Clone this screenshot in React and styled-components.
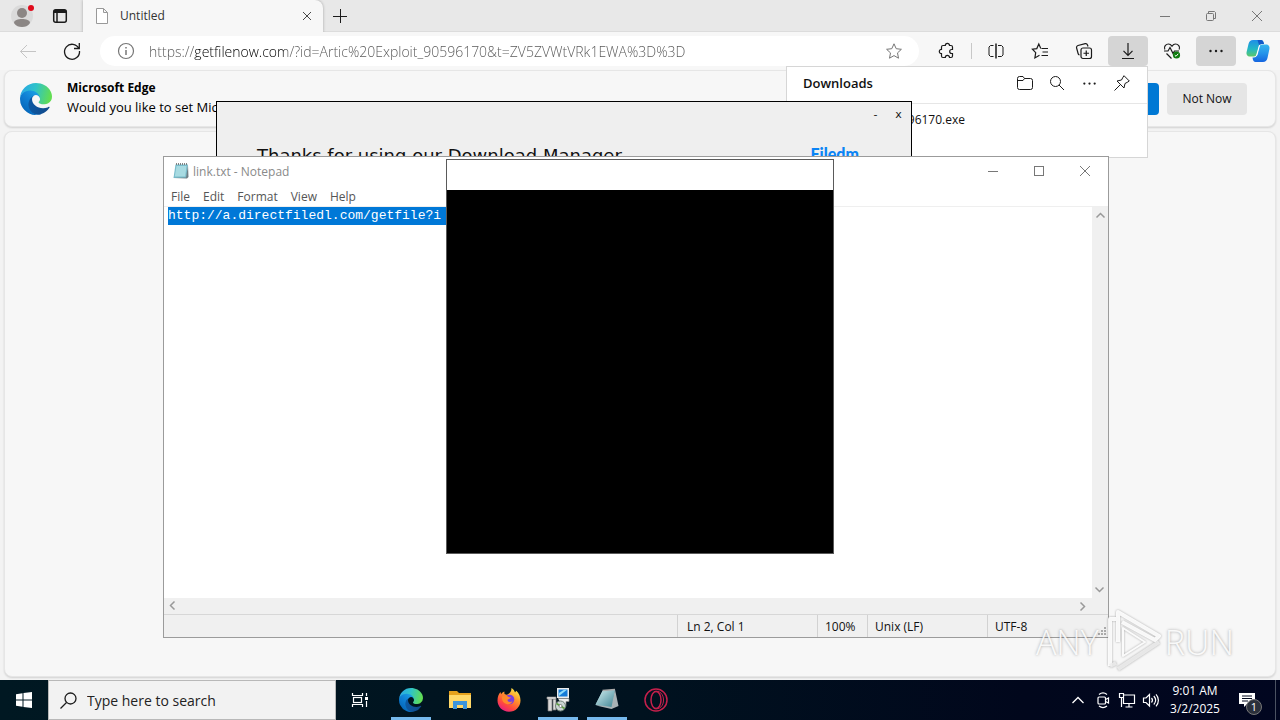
import React, { useId } from "react"
import styled, { createGlobalStyle, css } from "styled-components"

const GlobalStyle = createGlobalStyle`
    * { box-sizing: border-box; }
    body {
        margin: 0;
        overflow: hidden;
        font-family: "Open Sans", "Noto Sans", sans-serif;
        font-size: 12px;
        color: #111;
    }
    button, input, textarea {
        font: inherit;
        color: inherit;
        border: 0;
        padding: 0;
        margin: 0;
        background: none;
        outline: 0;
    }
    svg { display: block; flex: none; }
`

/* ---------- desktop ---------- */

const Desktop = styled.main`
    position: relative;
    display: flex;
    flex-direction: column;
    height: 100vh;
    overflow: hidden;
    background: #f3f3f3;
`
const IconButton = styled.button`
    display: flex;
    align-items: center;
    justify-content: center;
    flex: none;
    width: ${props => props.$width || 40}px;
    height: ${props => props.$height || 30}px;
    border-radius: ${props => props.$radius || 0}px;
    background: ${props => (props.$active ? "#d5d5d5" : "transparent")};
    color: ${props => props.$color || "#1b1b1b"};
`
const Icon = styled.svg.attrs({ fill: "none", stroke: "currentColor", "aria-hidden": true })`
    width: ${props => props.$size || 16}px;
    height: ${props => props.$size || 16}px;
    stroke-width: ${props => props.$stroke || 1};
    overflow: visible;
`

/* ---------- browser ---------- */

const Browser = styled.section`
    display: flex;
    flex-direction: column;
    flex: 1;
    min-height: 0;
    background: #f3f3f3;
`
const TabStrip = styled.div`
    display: flex;
    align-items: center;
    height: 32px;
    background: #e8e8e8;
    border-bottom: 1px solid #dcdcdc;
`
const StripButtons = styled.div`
    display: flex;
    align-items: center;
    gap: 6px;
    width: 83px;
    padding-left: 6px;
`
const Tab = styled.div`
    display: flex;
    align-items: center;
    align-self: stretch;
    width: 240px;
    margin-bottom: -1px;
    padding-left: 11px;
    background: #f7f7f7;
    border-radius: 0 8px 0 0;
    box-shadow: 0 0 3px rgba(0, 0, 0, .3);
    clip-path: inset(0 -4px 0 -4px);
    line-height: 30px;
    color: #333;
`
const TabTitle = styled.span`
    flex: 1;
    padding-left: 10px;
`
const WindowButtons = styled.div`
    display: flex;
    margin-left: auto;
`
const Toolbar = styled.div`
    display: flex;
    align-items: flex-start;
    gap: 4px;
    height: 38px;
    padding: 4px 4px 4px 8px;
    background: #f7f7f7;
`
const AddressBar = styled.label`
    display: flex;
    align-items: center;
    flex: 1;
    height: 30px;
    margin: 0 4px;
    padding: 0 17px;
    border-radius: 15px;
    background: #fff;
    color: #767676;
`
const AddressInput = styled.input`
    flex: 1;
    min-width: 0;
    height: 30px;
    padding-left: 14px;
    font-size: 14px;
    font-weight: 300;
    background: linear-gradient(90deg, #555 59px, #000 59px, #000 150px, #555 150px);
    background-clip: text;
    -webkit-text-fill-color: transparent;
`
const Divider = styled.span`
    align-self: center;
    width: 1px;
    height: 16px;
    background: #c8c8c8;
`
const Card = styled.div`
    margin: 0 4px;
    border: 1px solid #e6e6e6;
    border-radius: 8px;
    background: #f7f7f7;
    box-shadow: 0 1px 2px rgba(0, 0, 0, .14);
`
const InfoBar = styled(Card)`
    display: flex;
    align-items: center;
    gap: 8px;
    height: 57px;
    padding: 0 28px 0 15px;
`
const InfoText = styled.div`
    flex: 1;
    padding: 0 0 2px 7px;
    color: #000;
    line-height: 20px;
    font-size: 13px;
`
const InfoTitle = styled.strong`
    display: block;
    font-size: 12px;
    line-height: 18px;
`
const InfoButton = styled.button`
    width: ${props => props.$width}px;
    height: 32px;
    border-radius: 4px;
    background: ${props => (props.$primary ? "#0078d4" : "#e5e5e5")};
    color: ${props => (props.$primary ? "#fff" : "#111")};
`
const PageArea = styled(Card)`
    flex: 1;
    margin-top: 4px;
    margin-bottom: 3px;
`

/* ---------- floating windows ---------- */

const Floating = styled.section`
    position: absolute;
    display: flex;
    flex-direction: column;
`
const DownloadsPopup = styled(Floating)`
    top: 66px;
    right: 132px;
    width: 362px;
    height: 92px;
    background: #fff;
    border: 1px solid #d6d6d6;
`
const DownloadsHeader = styled.header`
    display: flex;
    align-items: center;
    height: 37px;
    padding: 0 8px 4px 16px;
    border-bottom: 1px solid #e6e6e6;
`
const DownloadsTitle = styled.h2`
    flex: 1;
    margin: 0;
    font-size: 13px;
    font-weight: 600;
`
const DownloadsItem = styled.div`
    padding: 7px 182px 0 0;
    line-height: 18px;
    text-align: right;
`
const Manager = styled(Floating)`
    top: 101px;
    left: 216px;
    width: 696px;
    height: 240px;
    background: #efefef;
    border: 1px solid #000;
`
const ManagerBar = styled.div`
    display: flex;
    justify-content: flex-end;
    height: 26px;
    padding-right: 1px;
    font-family: "DejaVu Sans", sans-serif;
    font-size: 11px;
`
const ManagerBody = styled.div`
    display: flex;
    justify-content: space-between;
    align-items: center;
    height: 50px;
    padding: 6px 52px 0 40px;
`
const ManagerHeading = styled.h1`
    margin: 0;
    font-family: "DejaVu Sans", sans-serif;
    font-size: 18px;
    font-weight: 400;
    line-height: 24px;
`
const ManagerLogo = styled.strong`
    font-family: Lato, sans-serif;
    font-size: 16px;
    font-weight: 900;
    line-height: 24px;
    padding-bottom: 4px;
    color: #0a84f5;
`
const Notepad = styled(Floating)`
    top: 156px;
    left: 163px;
    width: 946px;
    height: 482px;
    background: #fff;
    border: 1px solid #9b9b9b;
`
const NotepadTitle = styled.header`
    display: flex;
    align-items: center;
    gap: 4px;
    height: 30px;
    padding: 0 0 2px 9px;
    color: #8a8a8a;
`
const MenuBar = styled.nav`
    display: flex;
    gap: 13px;
    height: 20px;
    padding-left: 7px;
    border-bottom: 1px solid #efefef;
    color: #555;
`
const EditorRow = styled.div`
    display: flex;
    flex: 1;
    min-height: 0;
`
const Editor = styled.textarea`
    flex: 1;
    resize: none;
    overflow: hidden;
    padding: 0 4px;
    font-family: "Liberation Mono", monospace;
    font-size: 13px;
    line-height: 18px;
    color: #fff;
    background: linear-gradient(#0078d7, #0078d7) 4px 0 / 600px 18px no-repeat #fff;
`
const VerticalScroll = styled.div`
    display: flex;
    flex-direction: column;
    align-items: center;
    justify-content: space-between;
    width: 16px;
    padding-right: 1px;
    background: #f0f0f0;
`
const HorizontalScroll = styled.div`
    display: flex;
    align-items: center;
    justify-content: space-between;
    height: 16px;
    padding-right: 17px;
    background: #f0f0f0;
`
const StatusBar = styled.footer`
    display: flex;
    justify-content: flex-end;
    height: 23px;
    background: #f0f0f0;
    border-top: 1px solid #d7d7d7;
`
const StatusCell = styled.span`
    width: ${props => props.$width}px;
    padding-left: ${props => props.$indent || 7}px;
    border-left: 1px solid ${props => (props.$last ? "transparent" : "#d2d2d2")};
    line-height: 23px;
    white-space: nowrap;
`
const Grip = styled.span`
    align-self: flex-end;
    color: #aaa;
`
const Blackout = styled(Floating)`
    top: 159px;
    left: 446px;
    width: 388px;
    height: 395px;
    padding-top: 30px;
    background: #fff;
    border: 1px solid #5a5a5a;
`
const BlackoutBody = styled.div`
    flex: 1;
    background: #000;
`

/* ---------- watermark ---------- */

const Watermark = styled.div`
    position: absolute;
    right: 46px;
    bottom: 44px;
    display: flex;
    align-items: center;
    height: 68px;
    font-family: "Open Sans", sans-serif;
    font-size: 34px;
    font-weight: 300;
    line-height: 68px;
    color: rgba(255, 255, 255, .9);
    text-shadow: 0 0 3px rgba(0, 0, 0, .35);
    pointer-events: none;
`
const PlayMark = styled.svg`
    width: 66px;
    height: 68px;
    filter: drop-shadow(0 0 1px rgba(0, 0, 0, .35));
`

/* ---------- taskbar ---------- */

const Taskbar = styled.footer`
    position: relative;
    display: flex;
    align-items: stretch;
    height: 40px;
    background: linear-gradient(90deg, #001822, #00121f 50%, #01071c 80%, #010620);
    color: #fff;
`
const SearchBox = styled.label`
    display: flex;
    align-items: center;
    width: 288px;
    padding-left: 11px;
    background: #f2f2f2;
    border: 1px solid #b8b8b8;
    color: #1c1c1c;
`
const SearchInput = styled.input`
    flex: 1;
    min-width: 0;
    padding-left: 10px;
    font-size: 14px;
    &::placeholder { color: #222; opacity: 1; }
`
const Apps = styled.div`
    display: flex;
    gap: 1px;
    margin-left: 3px;
`
const AppButton = styled.button`
    display: flex;
    align-items: center;
    justify-content: center;
    width: 48px;
    height: 40px;
    ${props => props.$running && css`
        background: linear-gradient(#76b9ed, #76b9ed) 4px 37px / 40px 3px no-repeat;
    `}
`
const Tray = styled.div`
    display: flex;
    align-items: center;
    margin-left: auto;
`
const Clock = styled.time`
    width: 64px;
    text-align: center;
    line-height: 18px;
`
const Notifications = styled.button`
    position: relative;
    display: flex;
    align-items: center;
    justify-content: center;
    width: 40px;
    height: 40px;
`
const Badge = styled.span`
    position: absolute;
    left: 19px;
    top: 19px;
    width: 16px;
    height: 16px;
    border: 1px solid #777;
    border-radius: 50%;
    background: #2b303b;
    font-size: 11px;
    line-height: 14px;
    text-align: center;
`
const ShowDesktop = styled.button`
    width: 5px;
    margin-left: 8px;
    align-self: stretch;
    border-left: 1px solid #4b5262;
`

/* ---------- drawings ---------- */

const EdgeLogo = ({ size }) => {
    const id = useId()
    return (
        <svg width={size} height={size} viewBox="0 0 256 256" aria-hidden="true">
            <defs>
                <linearGradient id={id + "a"} x1="60" y1="170" x2="230" y2="170" gradientUnits="userSpaceOnUse">
                    <stop offset="0" stopColor="#0c59a4" />
                    <stop offset="1" stopColor="#114a8b" />
                </linearGradient>
                <linearGradient id={id + "b"} x1="150" y1="90" x2="40" y2="220" gradientUnits="userSpaceOnUse">
                    <stop offset="0" stopColor="#1b9de2" />
                    <stop offset=".5" stopColor="#0f7fd4" />
                    <stop offset="1" stopColor="#0669bc" />
                </linearGradient>
                <linearGradient id={id + "c"} x1="10" y1="60" x2="240" y2="120" gradientUnits="userSpaceOnUse">
                    <stop offset="0" stopColor="#2aa9e4" />
                    <stop offset=".45" stopColor="#2fc3c8" />
                    <stop offset="1" stopColor="#62dd52" />
                </linearGradient>
            </defs>
            <path fill={`url(#${id}a)`} d="M231 190.5c-3.4 1.8-6.9 3.4-10.5 4.7a101.5 101.5 0 0 1-35.9 6.4c-47.3 0-88.5-32.5-88.5-74.3a31.5 31.5 0 0 1 16.4-27.3c-42.8 1.8-53.8 46.4-53.8 72.5 0 74 68.1 81.4 82.8 81.4 7.9 0 19.8-2.3 27-4.6l1.3-.4a128.3 128.3 0 0 0 66.6-52.8 4 4 0 0 0-5.4-5.6z" />
            <path fill={`url(#${id}b)`} d="M105.7 241.4a79.2 79.2 0 0 1-22.7-21.3 80.7 80.7 0 0 1 29.5-120c3.2-1.5 8.5-4.1 15.6-4a32.4 32.4 0 0 1 25.7 13 31.9 31.9 0 0 1 6.3 18.7c0-.2 24.5-79.6-80-79.6-43.9 0-80 41.6-80 78.2a130.2 130.2 0 0 0 12.1 56 128 128 0 0 0 156.4 67 75.5 75.5 0 0 1-62.8-8z" />
            <path fill={`url(#${id}c)`} d="M152.3 148.9c-.9 1-3.4 2.5-3.4 5.6 0 2.6 1.7 5.2 4.8 7.3 14.3 10 41.4 8.6 41.5 8.6a59.6 59.6 0 0 0 30.3-8.3 61.4 61.4 0 0 0 30.4-52.9c.3-22.4-8-37.3-11.3-43.9C223.5 23.9 177.7 0 128 0a128 128 0 0 0-128 126.2c.5-36.5 36.8-66 80-66 3.5 0 23.5.3 42 10a72.6 72.6 0 0 1 30.9 29.3c6.1 10.6 7.2 24.1 7.2 29.5s-2.7 13.3-7.8 19.9z" />
        </svg>
    )
}

const CopilotLogo = () => (
    <svg width="24" height="24" viewBox="0 0 24 24" aria-hidden="true">
        <defs>
            <linearGradient id="cop1" x1="0" y1="0" x2="0" y2="1">
                <stop offset="0" stopColor="#1f8ee8" />
                <stop offset=".55" stopColor="#22b8c4" />
                <stop offset="1" stopColor="#5cc86a" />
            </linearGradient>
            <linearGradient id="cop2" x1="0" y1="0" x2="0" y2="1">
                <stop offset="0" stopColor="#37b6ee" />
                <stop offset=".5" stopColor="#2494ea" />
                <stop offset="1" stopColor="#1565e0" />
            </linearGradient>
        </defs>
        <path fill="url(#cop1)" d="M7 1h8c1.500 0 2.200 1 2.600 2.500L18 5h-2c-1.700 0-2.500.8-3 2.500L11 14.500c-.6 2-1.400 3-3.300 3H4C1.500 17.500 0 15.500.6 13l1.900-8C3.100 2.400 4.700 1 7 1z" />
        <path fill="url(#cop2)" d="M17 23H9.500c-1.500 0-2.200-1-2.600-2.500L6.500 18.500h1.300c1.700 0 2.700-.8 3.200-2.500l2-7.500c.6-2 1.400-3 3.300-3H20c2.500 0 4 2 3.400 4.500l-1.900 9C20.900 21.600 19.300 23 17 23z" />
        <path fill="#1259c8" d="M11.500 1H15c1.500 0 2.200 1 2.600 2.500L18 5h-2c-1.300 0-2.200.5-2.700 1.700z" />
        <path fill="#fff" d="M12.700 7c.3-.8.800-1.200 1.600-1.400l-2.800 10.200c-.3.900-.8 1.400-1.600 1.500z" />
    </svg>
)

const NotepadLogo = ({ size }) => (
    <svg width={size} height={size} viewBox="0 0 16 16" aria-hidden="true">
        <path d="M2.500 1.500h12.500l-1.500 13.500H.5z" fill="#79bccb" />
        <path d="M3.500 3h10l-1.300 10.500H1.800z" fill="#a8dbe2" />
        <path d="M15 2l.5 12-1.500 1.500-13.500-.5 12.500-.5z" fill="#6d7f86" />
        <path d="M3.500 0v2M5.500 0v2M7.500 0v2M9.500 0v2M11.500 0v2M13.500 0v2" stroke="#666" strokeWidth=".8" />
    </svg>
)

const Minimize = () => <Icon $size={10} viewBox="0 0 10 10"><path d="M0 5.500h10" /></Icon>
const Close = ({ size = 10 }) => <Icon $size={size} viewBox="0 0 10 10"><path d="M0 0l10 10M10 0L0 10" /></Icon>
const Dots = ({ size = 16 }) => (
    <Icon $size={size} viewBox="0 0 16 16">
        <g fill="currentColor" stroke="none">
            <circle cx="2.500" cy="8" r="1.200" /><circle cx="8" cy="8" r="1.200" /><circle cx="13.500" cy="8" r="1.200" />
        </g>
    </Icon>
)
const Chevron = ({ turn = 0 }) => (
    <Icon $size={16} viewBox="0 0 16 16">
        <path d="M4.500 10.500L8.500 6.500l4 4" transform={`rotate(${turn} 8 8)`} stroke="#999" strokeWidth="1.500" />
    </Icon>
)
const starPath = "M8 .8l2.200 4.900 5.200.6-3.900 3.600 1 5.300L8 12.600l-4.500 2.600 1-5.300L.6 6.300l5.200-.6z"

const menus = ["File", "Edit", "Format", "View", "Help"]

const EdgeWindow = () => (
    <Browser>
        <TabStrip>
            <StripButtons>
                <IconButton $width={32} aria-label="Profile">
                    <svg width="24" height="24" viewBox="0 0 24 24">
                        <circle cx="12" cy="12" r="11" fill="#dadada" />
                        <circle cx="12" cy="9" r="5" fill="#8b8684" />
                        <path d="M4 19c0-3 4-4 8-4s8 1 8 4c-2 3-5 4-8 4s-6-1-8-4z" fill="#8b8684" />
                        <circle cx="21" cy="4" r="3" fill="#e00b1c" />
                    </svg>
                </IconButton>
                <IconButton $width={32} aria-label="Tab actions">
                    <Icon $size={14} $stroke={1.5} viewBox="0 0 14 14">
                        <rect x=".7" y=".7" width="12.600" height="12.600" rx="2" />
                        <path d="M1 2.500h12" strokeWidth="3" /><path d="M4 4v9" />
                    </Icon>
                </IconButton>
            </StripButtons>
            <Tab>
                <Icon viewBox="0 0 16 16" color="#999"><path d="M2.500.5h7l4 4v11h-11zM9.500.5v4h4" fill="#fff" /></Icon>
                <TabTitle>Untitled</TabTitle>
                <IconButton $width={32} aria-label="Close tab"><Close size={8} /></IconButton>
            </Tab>
            <IconButton $width={34} aria-label="New tab">
                <Icon $size={14} viewBox="0 0 14 14"><path d="M7.500 0v14M0 7.500h14" /></Icon>
            </IconButton>
            <WindowButtons>
                <IconButton $width={46} $color="#777" aria-label="Minimize"><Minimize /></IconButton>
                <IconButton $width={46} $color="#777" aria-label="Restore">
                    <Icon $size={10} viewBox="0 0 10 10">
                        <rect x=".5" y="2.500" width="7" height="7" rx="1" /><path d="M2.500 2V.500h6l1 1v6H8" />
                    </Icon>
                </IconButton>
                <IconButton $width={46} $color="#777" aria-label="Close"><Close /></IconButton>
            </WindowButtons>
        </TabStrip>
        <Toolbar>
            <IconButton $color="#c4c4c4" aria-label="Back">
                <Icon viewBox="0 0 16 16"><path d="M16 8.500H.5M7 2L.5 8.500 7 15" /></Icon>
            </IconButton>
            <IconButton aria-label="Refresh">
                <Icon $stroke={1.3} viewBox="0 0 16 16"><path d="M14.800 5.500A7.500 7.500 0 1 0 15.500 8M15.300 0v5.500H10" /></Icon>
            </IconButton>
            <AddressBar>
                <Icon $size={18} $stroke={1.2} viewBox="0 0 18 18">
                    <circle cx="9" cy="9" r="7.500" /><path d="M9 8v5" strokeWidth="1.500" /><path d="M9 5v1.500" strokeWidth="1.500" />
                </Icon>
                <AddressInput aria-label="Address" defaultValue="https://getfilenow.com/?id=Artic%20Exploit_90596170&t=ZV5ZVWtVRk1EWA%3D%3D" />
                <Icon viewBox="0 0 16 16"><path d={starPath} /></Icon>
            </AddressBar>
            <IconButton aria-label="Extensions">
                <Icon $stroke={1.2} viewBox="0 0 16 16">
                    <path d="M4 2.500h2.300a2 2 0 0 1 4.200 0H12a1.500 1.500 0 0 1 1.500 1.500v2.500h-.8a2 2 0 0 0 0 4h.8V13a1.500 1.500 0 0 1-1.500 1.500h-1.500a2.100 2.100 0 0 0-4.200 0H4A1.500 1.500 0 0 1 2.500 13v-2.300a2.200 2.200 0 0 1 0-4.400V4A1.500 1.500 0 0 1 4 2.500z" />
                </Icon>
            </IconButton>
            <Divider />
            <IconButton aria-label="Split screen">
                <Icon viewBox="0 0 16 16">
                    <path d="M5.500 2.500h-3l-1.500 1.500v8l1.500 1.500h3M10 2.500h3.500L15 4v8l-1.500 1.500H10" /><path d="M8 .5v15" strokeWidth="1.500" />
                </Icon>
            </IconButton>
            <IconButton aria-label="Favorites">
                <Icon $stroke={1.2} viewBox="0 0 16 16"><path d="M8.800 5.500L6.800 1 4.800 5.600.4 6.200l3.300 3.500-.8 5.200 4.600-2.700M9.500 5.500H16M10.500 9H16M9.500 12.500H16" /></Icon>
            </IconButton>
            <IconButton aria-label="Collections">
                <Icon $stroke={1.200} viewBox="0 0 16 16">
                    <rect x="5" y="5" width="10.500" height="10.500" rx="2" />
                    <path d="M10.250 7.500v5.500M7.500 10.250H13M12 3.500L11.500 2a2 2 0 0 0-2.300-1.300L2 2.500A2 2 0 0 0 .6 5l1.500 5.500A2 2 0 0 0 3.500 12" />
                </Icon>
            </IconButton>
            <IconButton $active $radius={4} aria-label="Downloads">
                <Icon $stroke={1.2} viewBox="0 0 16 16"><path d="M8 0v12M3.500 7.800L8 12.300l4.500-4.500M2 15.500h12" /></Icon>
            </IconButton>
            <IconButton aria-label="Browser essentials">
                <Icon viewBox="0 0 16 16">
                    <path d="M.8 6.500C-.5 3.500 2 1 4.500 1 6.500 1 7.500 2.500 8 3.200 8.500 2.500 9.500 1 11.500 1 14 1 16.500 3.500 15.200 6.500M0 8h4L6 4.500l3 6L10.500 8H15M2.500 10.500L7.500 15.500" strokeWidth="1.200" />
                    <circle cx="12.500" cy="12" r="3.600" fill="#107c10" stroke="none" />
                    <path d="M10.800 12.200l1.200 1.100 2.200-2.500" stroke="#fff" />
                </Icon>
            </IconButton>
            <IconButton $active $radius={4} aria-label="Settings and more"><Dots /></IconButton>
            <IconButton $width={36} aria-label="Copilot"><CopilotLogo /></IconButton>
        </Toolbar>
        <InfoBar>
            <EdgeLogo size={32} />
            <InfoText>
                <InfoTitle>Microsoft Edge</InfoTitle>
                Would you like to set Microsoft
            </InfoText>
            <InfoButton $primary $width={110} aria-label="Confirm" />
            <InfoButton $width={80}>Not Now</InfoButton>
        </InfoBar>
        <PageArea />
    </Browser>
)

const Downloads = () => (
    <DownloadsPopup>
        <DownloadsHeader>
            <DownloadsTitle>Downloads</DownloadsTitle>
            <IconButton $width={32} aria-label="Open folder">
                <Icon viewBox="0 0 16 16"><path d="M.5 3.500a2 2 0 0 1 2-2H6l1.500 2h6a2 2 0 0 1 2 2v7a2 2 0 0 1-2 2h-11a2 2 0 0 1-2-2zM.5 5.500H6l1.500-2" /></Icon>
            </IconButton>
            <IconButton $width={32} aria-label="Search downloads">
                <Icon $size={14} viewBox="0 0 14 14"><circle cx="5.500" cy="5.500" r="5" /><path d="M9 9l5 5" /></Icon>
            </IconButton>
            <IconButton $width={32} aria-label="More options"><Dots size={15} /></IconButton>
            <IconButton $width={34} aria-label="Pin">
                <Icon viewBox="0 0 16 16"><path d="M10 .7L15.300 6l-1.500 1-2.800 1.500-1 4.500L3 6l4.500-1L9 2.200zM6.500 9.500L.5 15.500" /></Icon>
            </IconButton>
        </DownloadsHeader>
        <DownloadsItem>96170.exe</DownloadsItem>
    </DownloadsPopup>
)

const DownloadManager = () => (
    <Manager>
        <ManagerBar>
            <IconButton $width={23} $height={24}>-</IconButton>
            <IconButton $width={23} $height={24}>x</IconButton>
        </ManagerBar>
        <ManagerBody>
            <ManagerHeading>Thanks for using our Download Manager</ManagerHeading>
            <ManagerLogo>Filedm</ManagerLogo>
        </ManagerBody>
    </Manager>
)

const NotepadWindow = () => (
    <Notepad>
        <NotepadTitle>
            <NotepadLogo size={16} />
            link.txt - Notepad
            <WindowButtons>
                <IconButton $width={46} $color="#777" aria-label="Minimize"><Minimize /></IconButton>
                <IconButton $width={46} $color="#777" aria-label="Maximize">
                    <Icon $size={10} viewBox="0 0 10 10"><rect x=".5" y=".5" width="9" height="9" /></Icon>
                </IconButton>
                <IconButton $width={46} $color="#777" aria-label="Close"><Close /></IconButton>
            </WindowButtons>
        </NotepadTitle>
        <MenuBar>
            {menus.map(menu => <button key={menu}>{menu}</button>)}
        </MenuBar>
        <EditorRow>
            <Editor aria-label="Text editor" spellCheck={false} defaultValue="http://a.directfiledl.com/getfile?i" />
            <VerticalScroll><Chevron /><Chevron turn={180} /></VerticalScroll>
        </EditorRow>
        <HorizontalScroll><Chevron turn={-90} /><Chevron turn={90} /></HorizontalScroll>
        <StatusBar>
            <StatusCell $width={140} $indent={9}>Ln 2, Col 1</StatusCell>
            <StatusCell $width={50}>100%</StatusCell>
            <StatusCell $width={120}>Unix (LF)</StatusCell>
            <StatusCell $width={109}>UTF-8</StatusCell>
            <Grip>
                <Icon $size={12} viewBox="0 0 12 12" $stroke={2}>
                    <path d="M8 3h2M5 6h2M8 6h2M2 9h2M5 9h2M8 9h2" />
                </Icon>
            </Grip>
        </StatusBar>
    </Notepad>
)

const TaskbarRow = () => (
    <Taskbar>
        <IconButton $width={48} $height={40} $color="#fff" aria-label="Start">
            <svg width="16" height="16" viewBox="0 0 16 16" fill="#fff">
                <path d="M0 2.200L6.500 1.300v6.200H0zM7.500 1.100L16 0v7.500H7.500zM0 8.500h6.500v6.200L0 13.800zM7.500 8.500H16V16l-8.500-1.100z" />
            </svg>
        </IconButton>
        <SearchBox>
            <Icon $size={17} $stroke={1.3} viewBox="0 0 17 17"><circle cx="10.500" cy="6.500" r="5.500" /><path d="M6.500 10.500L.5 16.500" /></Icon>
            <SearchInput aria-label="Search" placeholder="Type here to search" />
        </SearchBox>
        <IconButton $width={48} $height={40} $color="#fff" aria-label="Task view">
            <Icon $stroke={1.2} viewBox="0 0 16 16">
                <path d="M.5 1v2.500h10V1M.5 15v-2.500h10V15" /><rect x="1.500" y="5.500" width="8" height="5" />
                <path d="M14.500 1v3M14.500 9v6" /><path d="M13 6.500h3" strokeWidth="3" />
            </Icon>
        </IconButton>
        <Apps>
            <AppButton $running aria-label="Microsoft Edge"><EdgeLogo size={24} /></AppButton>
            <AppButton aria-label="File Explorer">
                <svg width="22" height="20" viewBox="0 0 22 20">
                    <path d="M0 1h8l2 2h12v4H0z" fill="#e5a11c" />
                    <path d="M0 5h22v13H0z" fill="#ffd868" />
                    <path d="M4 11h14v8h-4v-4H8v4H4z" fill="#3b95dc" />
                </svg>
            </AppButton>
            <AppButton aria-label="Firefox">
                <svg width="24" height="24" viewBox="0 0 24 24">
                    <defs>
                        <linearGradient id="fox" x1=".8" y1="0" x2=".2" y2="1">
                            <stop offset="0" stopColor="#fff04a" /><stop offset=".35" stopColor="#ff9a2c" />
                            <stop offset=".7" stopColor="#ff4a3d" /><stop offset="1" stopColor="#e3178c" />
                        </linearGradient>
                    </defs>
                    <path fill="url(#fox)" d="M14.500 0c2 1 3 2.800 3.500 4.500l1.300-1.800c2.700 2.300 4.200 5.800 4.200 9.800 0 6.300-5 11.300-11.500 11.300S.5 18.800.5 12.600c0-3.500 1-6.500 3-8.600l.6 2.200C5 5 6 4 7.300 3.500L7.500 6l2 .8C12 6 14.500 4 14.500 0z" />
                    <circle cx="12.500" cy="11.500" r="4.800" fill="#7a3fe0" />
                    <path d="M5 8.500c2-1.500 5-1 6.500.5l2.500.5c-1 1.500-3 1.300-3.500 2.500 0 2 3 2.500 5 1.200-1 2.500-3.500 3.500-6 2.800C6 15 4.500 12 5 8.500z" fill="#ff8a2a" />
                </svg>
            </AppButton>
            <AppButton $running aria-label="Installer">
                <svg width="24" height="24" viewBox="0 0 24 24">
                    <path d="M2 10h4v13H2zM7 11h3v11H7z" fill="#d9d9d9" stroke="#777" strokeWidth=".7" />
                    <path d="M1 9h9v2H1zM12 10.500h11v3h-3v5h-3" fill="#eee" stroke="#888" strokeWidth=".7" />
                    <circle cx="14.500" cy="18" r="5" fill="#cbd5d3" stroke="#718178" />
                    <path d="M14.500 18l-4-2.500M14.500 18l4 2.500" stroke="#5fa044" strokeWidth="1.500" />
                    <circle cx="14.500" cy="18" r="1.500" fill="#fff" stroke="#555" strokeWidth=".6" />
                    <rect x="11" y="0" width="12" height="10" fill="#ececec" /><rect x="12.500" y="1.500" width="9" height="7" fill="#157bd8" />
                    <path d="M13 8v-3L18 1.800h3z" fill="#8fdcfb" />
                </svg>
            </AppButton>
            <AppButton $running aria-label="Notepad">
                <svg width="24" height="24" viewBox="0 0 24 24">
                    <defs>
                        <linearGradient id="pad" x1="0" y1="0" x2="1" y2="1"><stop offset="0" stopColor="#d5f0f2" /><stop offset="1" stopColor="#3f8594" /></linearGradient>
                    </defs>
                    <path d="M7.500 3L20 1.500 16.500 20 .5 17z" fill="url(#pad)" />
                    <path d="M20 1.500L23.500 18 16.500 21 1 17.500l15-.5z" fill="#a9b3b6" />
                    <path d="M7.500 3L20 1.500 16.500 19 .5 16.500z" fill="url(#pad)" /><path d="M7.500 2.500L20 1.500" stroke="#aaa" strokeWidth="1.500" />
                </svg>
            </AppButton>
            <AppButton aria-label="Opera GX">
                <svg width="24" height="24" viewBox="0 0 24 24" fill="none" stroke="#c5204c">
                    <circle cx="12" cy="12" r="11" strokeWidth="1.500" />
                    <ellipse cx="12" cy="12" rx="5" ry="8.500" strokeWidth="1.500" />
                    <path d="M10 3.500c6-1.500 9.500 3 9.500 8.500s-3.500 10-9.500 8.500" />
                </svg>
            </AppButton>
        </Apps>
        <Tray>
            <IconButton $width={26} $color="#fff" aria-label="Show hidden icons">
                <Icon $size={12} $stroke={1.3} viewBox="0 0 12 12"><path d="M.5 9L6 3.500 11.500 9" /></Icon>
            </IconButton>
            <IconButton $width={24} $color="#fff" aria-label="Meet now">
                <Icon $stroke={1.200} viewBox="0 0 16 16"><rect x="3" y="5" width="7.500" height="7" rx="1" /><path d="M10.500 7.500L13.500 6v5l-3-1.500M4 2.500c2.500-2 5.500-2 8 0M4 14c2.500 2 5.500 2 8 0" /></Icon>
            </IconButton>
            <IconButton $width={24} $color="#fff" aria-label="Network">
                <Icon $stroke={1.200} viewBox="0 0 16 16"><path d="M4.500 3h11v8.500h-11zM10 11.500V15M6.500 15h7M.5 1.500h4v4h-4zM2.500 5.500V15" /></Icon>
            </IconButton>
            <IconButton $width={24} $color="#fff" aria-label="Volume">
                <Icon $stroke={1.200} viewBox="0 0 16 16"><path d="M.5 6v4.500h2.500L6.500 14V2.500L3 6zM8.500 6c1.300 1.500 1.300 3 0 4.500M10.800 4c2.200 2.500 2.200 6 0 8.500M13 2.300c3.200 3.500 3.200 8.400 0 12" /></Icon>
            </IconButton>
            <Clock>9:01 AM<br />3/2/2025</Clock>
            <Notifications aria-label="Notifications">
                <svg width="16" height="16" viewBox="0 0 16 16">
                    <path d="M0 1h16v11H8l-3 3v-3H0z" fill="#fff" /><path d="M3 4h10M3 6.500h10M3 9h6" stroke="#01071c" />
                </svg>
                <Badge>1</Badge>
            </Notifications>
            <ShowDesktop aria-label="Show desktop" />
        </Tray>
    </Taskbar>
)

export default () => (
    <Desktop>
        <GlobalStyle />
        <EdgeWindow />
        <Downloads />
        <DownloadManager />
        <NotepadWindow />
        <Blackout>
            <BlackoutBody />
        </Blackout>
        <Watermark>
            <span>ANY</span>
            <PlayMark viewBox="0 0 66 68" fill="none" stroke="rgba(255,255,255,.9)" strokeWidth="4" strokeLinejoin="round">
                <path d="M17 11h-6v47M19 34V4l41 24-4 4-33-18" />
                <path d="M24 20v28l22-14z" strokeWidth="2" />
                <path d="M11 58l6-3M60 34L19 61" stroke="rgba(236,236,236,.9)" />
            </PlayMark>
            <span>RUN</span>
        </Watermark>
        <TaskbarRow />
    </Desktop>
)
